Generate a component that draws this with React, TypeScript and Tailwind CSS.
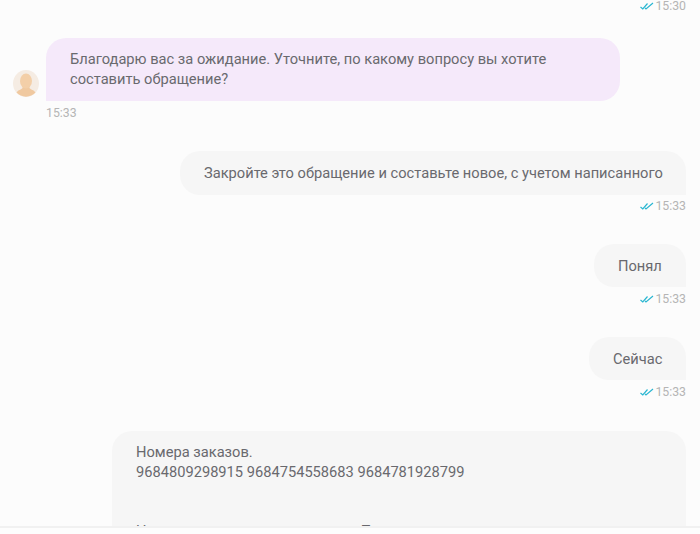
export default function App() {
  const Tick = () => (
    <svg width="14" height="8" viewBox="0 0 14 8" fill="none" stroke="#29b6d1" strokeWidth="1.2" className="mr-[1px]">
      <path d="M0.5 5 L2.8 7 L7.5 1.5" />
      <path d="M5 5.8 L6 7 L13 1" />
    </svg>
  );
  const Time = () => (
    <div className="flex items-center justify-end h-[14px] text-[12.3px] leading-[14px] text-[#b5b5b5] mr-[14px]">
      <Tick />
      <span>15:33</span>
    </div>
  );
  const Out = ({ children, w }: { children: React.ReactNode; w: string }) => (
    <div className={`self-end mr-[14px] rounded-[20px] rounded-br-none bg-[#f6f6f6] ${w}`}>{children}</div>
  );
  return (
    <div className="w-[700px] h-[534px] overflow-hidden bg-[#fdfdfd] flex flex-col font-['Roboto',sans-serif] text-[14.67px] leading-[20px] text-[#69696e]">
      <div className="h-[526px] overflow-hidden bg-[#fcfcfc] flex flex-col">
        <div className="flex items-center justify-end h-[14px] -mt-[1px] text-[12.3px] leading-[14px] text-[#b5b5b5] mr-[14px]">
          <Tick />
          <span>15:30</span>
        </div>
        <div className="flex items-end ml-[13px] mt-[25px]">
          <svg width="26" height="27" viewBox="0 0 26 27" className="mb-[4px] shrink-0">
            <ellipse cx="13" cy="13.500" rx="13" ry="13.500" fill="#f5ece3" />
            <path d="M3.500 22.500c1.500-2.500 5-3 6-4.500v-3h7v3c1 1.500 4.500 2 6 4.500A13 13 0 0 1 3.500 22.500z" fill="#f0c9a0" />
            <ellipse cx="13" cy="11" rx="6" ry="7.500" fill="#f3cfa8" />
          </svg>
          <div className="ml-[7px] w-[574px] h-[63px] rounded-[20px] rounded-bl-none bg-[#f5e9fa] pl-[24px] pr-[24px] pt-[11px]">
            Благодарю вас за ожидание. Уточните, по какому вопросу вы хотите составить обращение?
          </div>
        </div>
        <div className="ml-[46px] mt-[5px] h-[14px] text-[12.3px] leading-[14px] text-[#b5b5b5]">15:33</div>
        <div className="mt-[31px] flex flex-col">
          <Out w="w-[506px] h-[44px] pl-[24px] pt-[12px]">Закройте это обращение и составьте новое, с учетом написанного</Out>
        </div>
        <div className="mt-[4px]"><Time /></div>
        <div className="mt-[31px] flex flex-col">
          <Out w="w-[92px] h-[43px] pl-[24px] pt-[12px]">Понял</Out>
        </div>
        <div className="mt-[5px]"><Time /></div>
        <div className="mt-[31px] flex flex-col">
          <Out w="w-[97px] h-[43px] pl-[24px] pt-[12px]">Сейчас</Out>
        </div>
        <div className="mt-[5px]"><Time /></div>
        <div className="mt-[32px] flex flex-col">
          <Out w="w-[574px] h-[200px] pl-[24px] pt-[11px]">
            <div>Номера заказов.</div>
            <div>9684809298915 9684754558683 9684781928799</div>
            <div className="h-[39px]" />
            <div>Номера заказов, по которым не Продавец</div>
          </Out>
        </div>
      </div>
      <div className="h-[2px] bg-[#f1f1f1]" />
    </div>
  );
}
